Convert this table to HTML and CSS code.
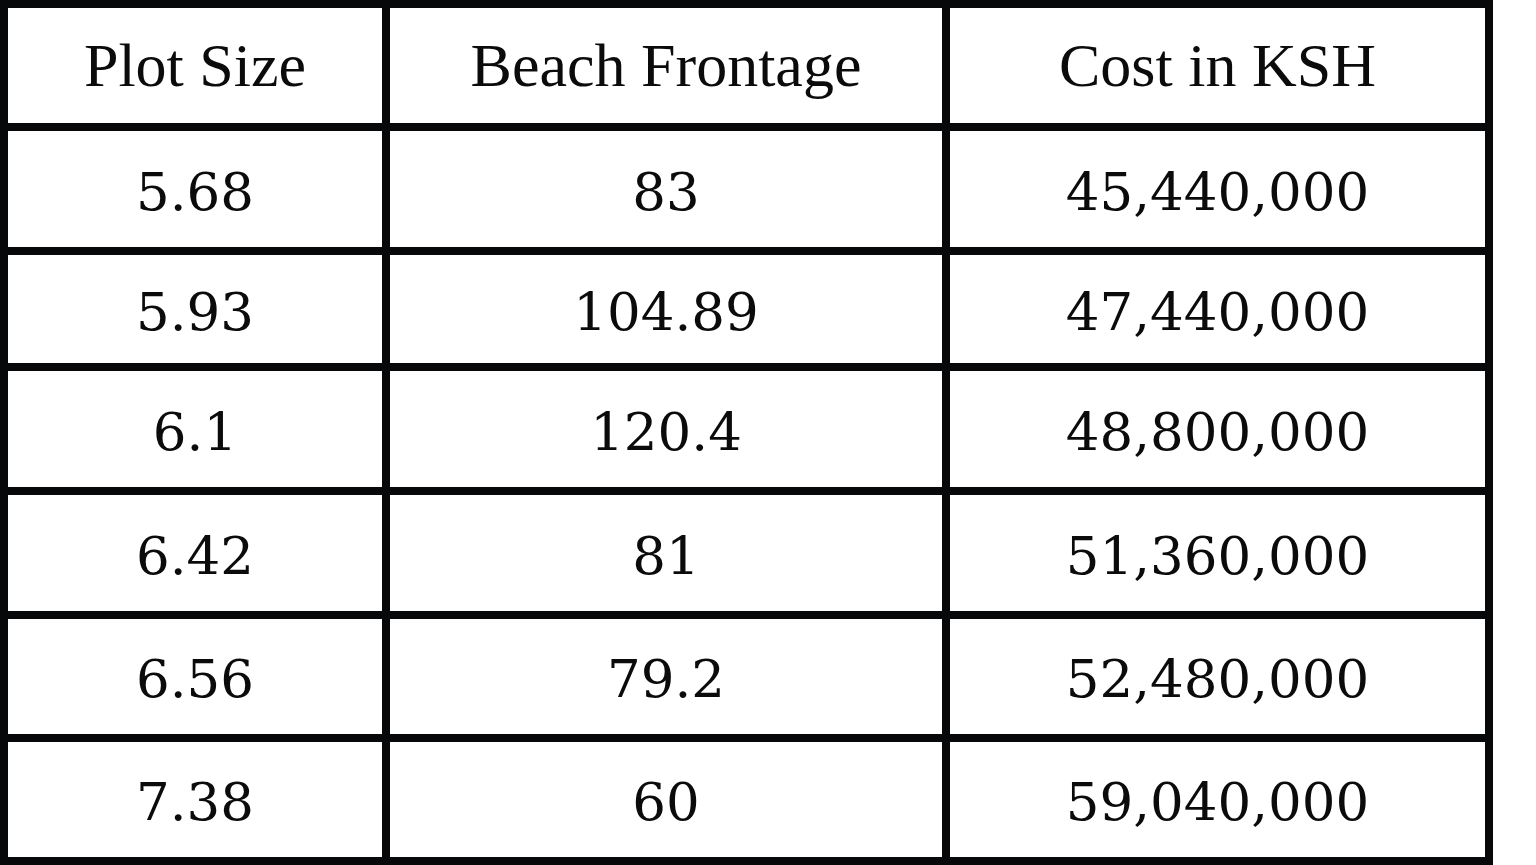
FILE: index.html
```html
<!DOCTYPE html>
<html>
<head>
<meta charset="utf-8">
<link rel="stylesheet" href="styles.css">
</head>
<body>
<div class="table">
  <div class="cell head">Plot Size</div>
  <div class="cell head">Beach Frontage</div>
  <div class="cell head">Cost in KSH</div>

  <div class="cell num">5.68</div>
  <div class="cell num">83</div>
  <div class="cell num">45,440,000</div>

  <div class="cell num">5.93</div>
  <div class="cell num">104.89</div>
  <div class="cell num">47,440,000</div>

  <div class="cell num">6.1</div>
  <div class="cell num">120.4</div>
  <div class="cell num">48,800,000</div>

  <div class="cell num">6.42</div>
  <div class="cell num">81</div>
  <div class="cell num">51,360,000</div>

  <div class="cell num">6.56</div>
  <div class="cell num">79.2</div>
  <div class="cell num">52,480,000</div>

  <div class="cell num">7.38</div>
  <div class="cell num">60</div>
  <div class="cell num">59,040,000</div>
</div>
</body>
</html>
```

FILE: styles.css
```css
html, body {
  margin: 0;
  padding: 0;
  background: #ffffff;
}

.table {
  display: grid;
  grid-template-columns: 374px 552px 535px;
  grid-template-rows: 115px 116px 108px 116px 116px 115px 115px;
  gap: 8px;
  padding: 8px;
  width: max-content;
  background: #07080a;
}

.cell {
  background: #ffffff;
  color: #0b0b0b;
  display: flex;
  align-items: center;
  justify-content: center;
}

.head {
  font-family: "Liberation Serif", "Times New Roman", serif;
  font-size: 62px;
}

.num {
  font-family: "DejaVu Serif", "Liberation Serif", serif;
  font-size: 53px;
  padding-top: 4px;
}
```
